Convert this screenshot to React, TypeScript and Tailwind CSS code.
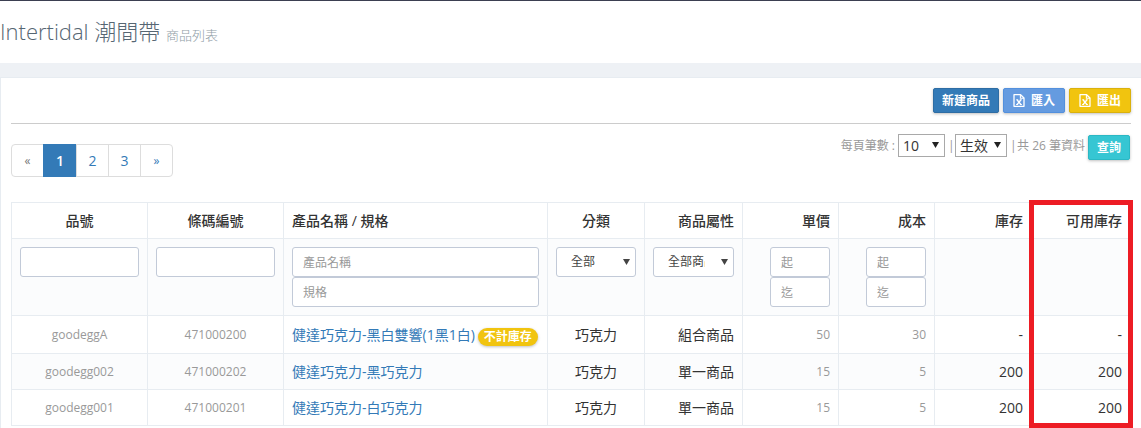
import type { ReactNode } from "react";

const products = [
  { sku: "goodeggA", barcode: "471000200", name: "健達巧克力-黑白雙響(1黑1白)", badge: "不計庫存", category: "巧克力", kind: "組合商品", price: "50", cost: "30", stock: "-", available: "-" },
  { sku: "goodegg002", barcode: "471000202", name: "健達巧克力-黑巧克力", badge: "", category: "巧克力", kind: "單一商品", price: "15", cost: "5", stock: "200", available: "200" },
  { sku: "goodegg001", barcode: "471000201", name: "健達巧克力-白巧克力", badge: "", category: "巧克力", kind: "單一商品", price: "15", cost: "5", stock: "200", available: "200" },
];

function ExcelIcon() {
  return (
    <svg className="h-[13px] w-3" viewBox="0 0 12 13" fill="none" stroke="currentColor" aria-hidden="true">
      <path d="M1 .7h6.6L11 4v8.3H1z" strokeWidth="1.3" strokeLinejoin="round" />
      <path d="M7.4.8v3.4H11" strokeWidth="1.1" />
      <path d="M3.2 5.8h2M6.8 5.8h2M3.1 10.5h2M6.9 10.5h2" strokeWidth="1" />
      <path d="M4.2 6l3.6 4.4M7.8 6l-3.6 4.4" strokeWidth="1.4" />
    </svg>
  );
}

function Select({ label, options, className, arrow }: { label: string; options: string[]; className: string; arrow: string }) {
  return (
    <span className="relative inline-block align-top">
      <select aria-label={label} className={"appearance-none overflow-hidden border bg-white " + className}>
        {options.map((o) => (
          <option key={o}>{o}</option>
        ))}
      </select>
      <svg className={"pointer-events-none absolute h-[6px] w-[7px] " + arrow} viewBox="0 0 7 6" fill="currentColor" aria-hidden="true">
        <path d="M0 0h7L3.5 6z" />
      </svg>
    </span>
  );
}

function Field({ label, placeholder, className = "w-full" }: { label: string; placeholder?: string; className?: string }) {
  return (
    <input
      type="text"
      aria-label={label}
      placeholder={placeholder}
      className={"block h-[30px] rounded-[3px] border border-[#c2cad8] bg-white px-2.5 text-xs text-[#555] placeholder:text-[#999] " + className}
    />
  );
}

function ActionButton({ className, children }: { className: string; children: ReactNode }) {
  return (
    <button
      type="button"
      className={"flex h-[25px] items-center justify-center gap-1.5 rounded-[2px] border text-xs font-bold text-white shadow-[0_1px_3px_rgba(0,0,0,0.25)] " + className}
    >
      {children}
    </button>
  );
}

function Range({ label }: { label: string }) {
  return (
    <div className="flex flex-col items-end">
      <Field label={label + "起"} placeholder="起" className="w-[60px]" />
      <Field label={label + "迄"} placeholder="迄" className="w-[60px]" />
    </div>
  );
}

const cell = "border border-[#e7ecf1] px-2 ";
const filterSelect = "h-[30px] rounded-[3px] border-[#c2cad8] pl-3.5 text-xs text-[#444] ";
const pageItem = "-ml-px flex h-[33px] items-center justify-center border border-[#ddd] ";

export default function App() {
  return (
    <div className="min-h-screen bg-[#eef1f5] font-['Open_Sans','Noto_Sans_CJK_TC',sans-serif] text-[#333]">
      <header className="flex h-[63px] items-center border-t border-[#3b3f51] bg-white pt-0.5">
        <h1 className="text-[22px] leading-[30px] font-light text-[#566673]">
          Intertidal 潮間帶 <small className="text-[13px] text-[#8f9da6]">商品列表</small>
        </h1>
      </header>
      <main className="pt-3.5">
        <section className="border-t border-l border-[#e7ecf1] bg-white px-2.5 pb-5">
          <div className="flex justify-end gap-1 border-b border-[#ccc] pt-2.5 pb-2.5">
            <ActionButton className="border-[#2e6da4] bg-[#337ab7] px-2">新建商品</ActionButton>
            <ActionButton className="w-[62px] border-[#5390dd] bg-[#659be0]">
              <ExcelIcon />
              匯入
            </ActionButton>
            <ActionButton className="w-[62px] border-[#dab10d] bg-[#f1c40f]">
              <ExcelIcon />
              匯出
            </ActionButton>
          </div>

          <div className="flex items-start justify-between pt-2.5">
            <nav aria-label="分頁" className="mt-2.5 flex pl-px text-sm text-[#337ab7]">
              <a href="#prev" aria-label="上一頁" className={pageItem + "w-[33px] rounded-l text-xs text-[#777]"}>«</a>
              <a href="#1" aria-current="page" className="-ml-px flex h-[33px] w-[34px] items-center justify-center border border-[#337ab7] bg-[#337ab7] font-semibold text-white">1</a>
              <a href="#2" className={pageItem + "w-[33px]"}>2</a>
              <a href="#3" className={pageItem + "w-[33px]"}>3</a>
              <a href="#next" aria-label="下一頁" className={pageItem + "w-[33px] rounded-r text-xs"}>»</a>
            </nav>
            <div className="flex items-start gap-[3px] pr-px text-xs leading-[23px] text-[#999]">
              <span>每頁筆數 :</span>
              <Select label="每頁筆數" options={["10", "20", "50"]} className="h-[23px] w-[47px] border-[#a9a9a9] pl-1 text-sm leading-5 text-[#333]" arrow="top-2 right-1.5 text-[#222]" />
              <span className="w-1 text-center">|</span>
              <Select label="狀態" options={["生效", "失效"]} className="h-[23px] w-[52px] border-[#a9a9a9] pl-1 text-sm leading-5 text-[#333]" arrow="top-2 right-1.5 text-[#222]" />
              <span className="w-1 text-center">|</span>
              <span>共 26 筆資料</span>
              <ActionButton className="mt-px border-[#2bb8c4] bg-[#36c6d3] px-2">查詢</ActionButton>
            </div>
          </div>

          <div className="relative mt-[25px]">
            <table className="w-full table-fixed border-collapse text-sm">
              <colgroup>
                <col className="w-[136px]" />
                <col className="w-[136px]" />
                <col className="w-[264px]" />
                <col className="w-[97px]" />
                <col className="w-[98px]" />
                <col className="w-[96px]" />
                <col className="w-[96px]" />
                <col className="w-[97px]" />
                <col />
              </colgroup>
              <thead>
                <tr className="h-9">
                  <th className={cell + "font-medium"}>品號</th>
                  <th className={cell + "font-medium"}>條碼編號</th>
                  <th className={cell + "text-left font-medium"}>產品名稱 / 規格</th>
                  <th className={cell + "font-medium"}>分類</th>
                  <th className={cell + "text-right font-medium"}>商品屬性</th>
                  <th className={cell + "text-right font-medium"}>單價</th>
                  <th className={cell + "text-right font-medium"}>成本</th>
                  <th className={cell + "text-right font-medium"}>庫存</th>
                  <th className={cell + "text-right font-medium"}>可用庫存</th>
                </tr>
                <tr className="h-[77px] bg-[#fbfcfd] align-top">
                  <td className={cell + "py-2"}><Field label="品號" /></td>
                  <td className={cell + "py-2"}><Field label="條碼編號" /></td>
                  <td className={cell + "py-2"}>
                    <Field label="產品名稱" placeholder="產品名稱" />
                    <Field label="規格" placeholder="規格" />
                  </td>
                  <td className={cell + "py-2"}>
                    <Select label="分類" options={["全部", "巧克力"]} className={filterSelect + "w-20 pr-5"} arrow="top-3 right-1.5 text-[#444]" />
                  </td>
                  <td className={cell + "py-2"}>
                    <Select label="商品屬性" options={["全部商品", "組合商品", "單一商品"]} className={filterSelect + "w-[81px] pr-7"} arrow="top-3 right-1.5 text-[#444]" />
                  </td>
                  <td className={cell + "py-2"}><Range label="單價" /></td>
                  <td className={cell + "py-2"}><Range label="成本" /></td>
                  <td className={cell} />
                  <td className={cell} />
                </tr>
              </thead>
              <tbody>
                {products.map((p) => (
                  <tr key={p.sku} className={"even:bg-[#fbfcfd] " + (p.badge ? "h-[38px]" : "h-9")}>
                    <td className={cell + "text-center text-xs text-[#999]"}>{p.sku}</td>
                    <td className={cell + "text-center text-xs text-[#999]"}>{p.barcode}</td>
                    <td className={cell}>
                      <div className="flex items-center gap-[3px] whitespace-nowrap">
                        <a href={"#" + p.sku} className="text-[#337ab7]">{p.name}</a>
                        {p.badge && (
                          <span className="mt-1 rounded-full bg-[#f1c40f] px-1.5 text-xs leading-[18px] font-bold text-white shadow-[0_1px_3px_rgba(0,0,0,0.25)]">{p.badge}</span>
                        )}
                      </div>
                    </td>
                    <td className={cell + "text-center"}>{p.category}</td>
                    <td className={cell + "text-right"}>{p.kind}</td>
                    <td className={cell + "text-right text-xs text-[#999]"}>{p.price}</td>
                    <td className={cell + "text-right text-xs text-[#999]"}>{p.cost}</td>
                    <td className={cell + "text-right"}>{p.stock}</td>
                    <td className={cell + "text-right"}>{p.available}</td>
                  </tr>
                ))}
              </tbody>
            </table>
            <div className="pointer-events-none absolute -top-0.5 -right-0.5 -bottom-0.5 w-[104px] border-[5px] border-[#ed1c24]" />
          </div>
        </section>
      </main>
    </div>
  );
}
